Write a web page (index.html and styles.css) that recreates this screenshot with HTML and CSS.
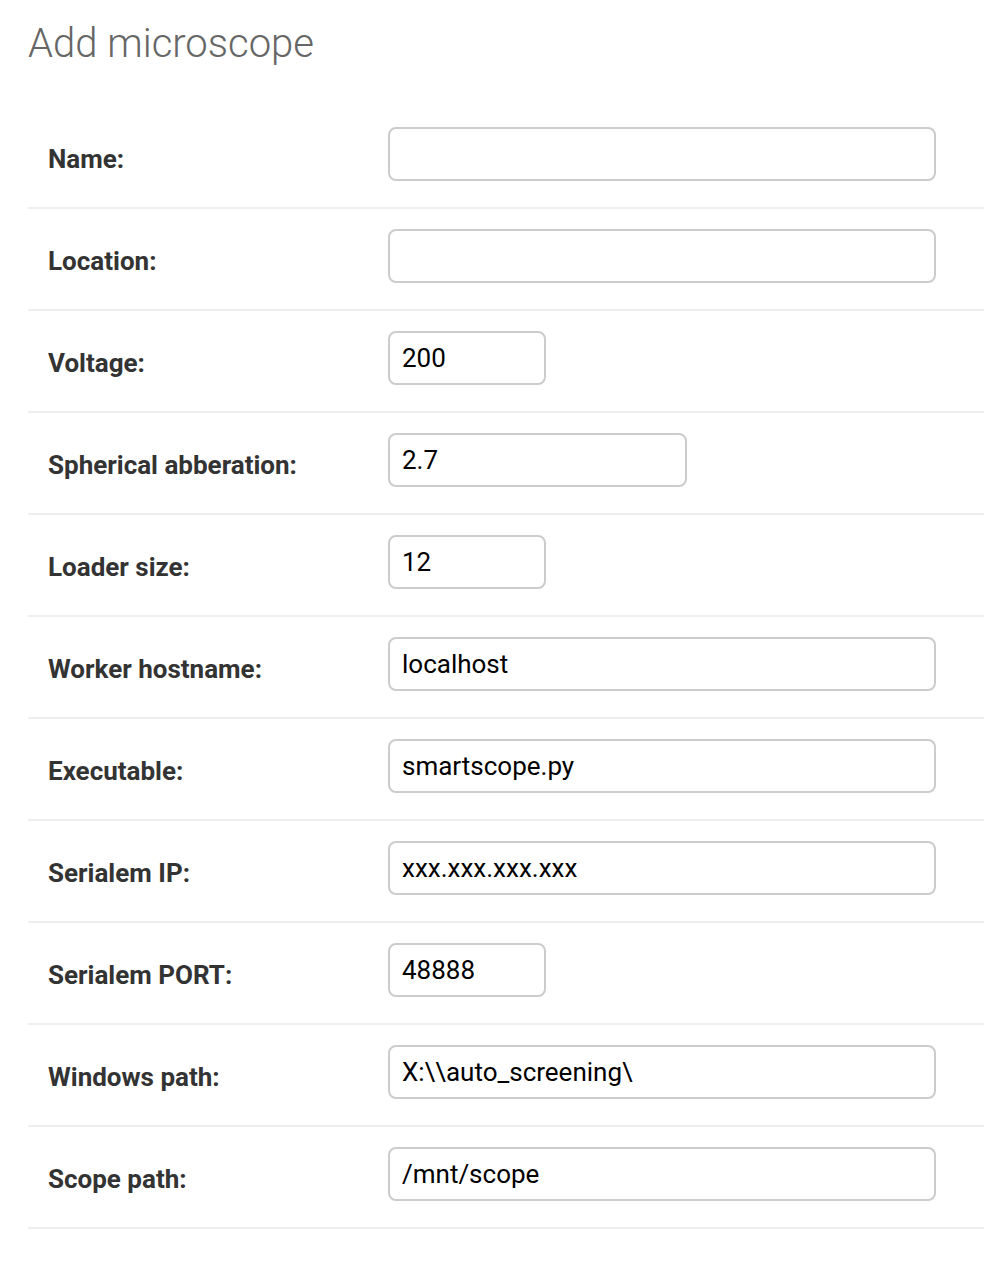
FILE: index.html
```
<!DOCTYPE html>
<html>
<head>
<meta charset="utf-8">
<link rel="stylesheet" href="styles.css">
</head>
<body>
<div class="page">
  <h1 class="title">Add microscope</h1>
  <form class="form">
    <div class="row"><label class="label">Name:</label><input class="field wide" type="text" value=""></div>
    <div class="row"><label class="label">Location:</label><input class="field wide" type="text" value=""></div>
    <div class="row"><label class="label">Voltage:</label><input class="field small" type="text" value="200"></div>
    <div class="row"><label class="label">Spherical abberation:</label><input class="field medium" type="text" value="2.7"></div>
    <div class="row"><label class="label">Loader size:</label><input class="field small" type="text" value="12"></div>
    <div class="row"><label class="label">Worker hostname:</label><input class="field wide" type="text" value="localhost"></div>
    <div class="row"><label class="label">Executable:</label><input class="field wide" type="text" value="smartscope.py"></div>
    <div class="row"><label class="label">Serialem IP:</label><input class="field wide" type="text" value="xxx.xxx.xxx.xxx"></div>
    <div class="row"><label class="label">Serialem PORT:</label><input class="field small" type="text" value="48888"></div>
    <div class="row"><label class="label">Windows path:</label><input class="field wide" type="text" value="X:\\auto_screening\"></div>
    <div class="row"><label class="label">Scope path:</label><input class="field wide" type="text" value="/mnt/scope"></div>
  </form>
</div>
</body>
</html>
```
FILE: styles.css
```
html, body {
  margin: 0;
  padding: 0;
  background: #fff;
}
body {
  font-family: Roboto, "Liberation Sans", sans-serif;
  color: #333;
}
.page {
  padding: 20px 0 0 28px;
}
.title {
  margin: 0 0 40px 0;
  font-size: 40px;
  font-weight: 300;
  line-height: 47px;
  color: #666;
}
.form {
  display: flex;
  flex-direction: column;
}
.row {
  display: flex;
  align-items: flex-start;
  height: 100px;
  box-sizing: content-box;
  border-bottom: 2px solid #eee;
  padding-left: 20px;
}
.label {
  width: 340px;
  flex: none;
  padding-top: 37px;
  font-size: 26px;
  line-height: 30px;
  font-weight: 700;
  color: #333;
}
.field {
  margin-top: 20px;
  height: 54px;
  box-sizing: border-box;
  border: 2px solid #ccc;
  border-radius: 8px;
  padding: 0 12px;
  font-family: Roboto, "Liberation Sans", sans-serif;
  font-size: 26px;
  color: #000;
  background: #fff;
  outline: none;
}
.wide { width: 548px; }
.medium { width: 299px; }
.small { width: 158px; }
```
